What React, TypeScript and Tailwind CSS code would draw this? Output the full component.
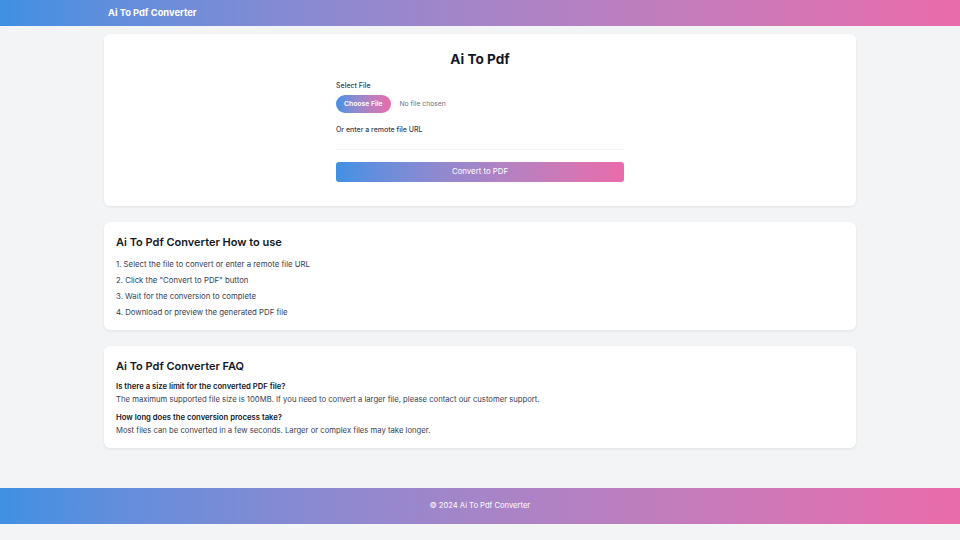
const gradient = "bg-gradient-to-r from-[#3f90e3] to-[#ea6bab]";

const steps = [
  "1. Select the file to convert or enter a remote file URL",
  '2. Click the "Convert to PDF" button',
  "3. Wait for the conversion to complete",
  "4. Download or preview the generated PDF file",
];

const faqs = [
  {
    q: "Is there a size limit for the converted PDF file?",
    a: "The maximum supported file size is 100MB. If you need to convert a larger file, please contact our customer support.",
  },
  {
    q: "How long does the conversion process take?",
    a: "Most files can be converted in a few seconds. Larger or complex files may take longer.",
  },
];

export default function App() {
  return (
    <div className="min-h-[540px] bg-[#f3f4f6] font-['Inter',sans-serif] text-[#111827]">
      <header className={`${gradient} h-[26px]`}>
        <div className="mx-auto flex h-full w-[752px] items-center px-1">
          <span className="text-[9.3px] font-bold text-white">Ai To Pdf Converter</span>
        </div>
      </header>

      <main className="mx-auto flex w-[752px] flex-col gap-4 pt-2">
        <section className="rounded-md bg-white pb-6 pt-4 shadow-[0_1px_3px_rgba(0,0,0,0.08)]">
          <h1 className="text-center text-[13.6px] font-bold leading-[18px]">Ai To Pdf</h1>
          <div className="mx-auto mt-[13px] w-[288px]">
            <label className="block text-[7px] font-medium leading-[10px] text-[#374151]">Select File</label>
            <div className="mt-[4px] flex items-center gap-[9px]">
              <span className={`${gradient} flex h-[18px] items-center rounded-full px-[8px] text-[6.8px] font-semibold text-white`}>
                Choose File
              </span>
              <span className="text-[6.8px] text-[#6b7280]">No file chosen</span>
            </div>
            <label className="mt-[12px] block text-[7px] font-medium leading-[10px] text-[#374151]">
              Or enter a remote file URL
            </label>
            <div className="mt-[9px] h-[6px] border-b border-[#f1f2f4]" />
            <button
              type="button"
              className={`${gradient} mt-[12px] flex h-[20px] w-full items-center justify-center rounded-[3px] text-[7.8px] text-white`}
            >
              Convert to PDF
            </button>
          </div>
        </section>

        <section className="rounded-md bg-white px-3 pb-[12px] pt-[13px] shadow-[0_1px_3px_rgba(0,0,0,0.08)]">
          <h2 className="text-[11px] font-semibold leading-[14px]">Ai To Pdf Converter How to use</h2>
          <ol className="mt-[10px] flex flex-col gap-[5px]">
            {steps.map((s) => (
              <li key={s} className="text-[7.8px] leading-[11px] text-[#374151]">
                {s}
              </li>
            ))}
          </ol>
        </section>

        <section className="rounded-md bg-white px-3 pb-[11px] pt-[13px] shadow-[0_1px_3px_rgba(0,0,0,0.08)]">
          <h2 className="text-[11px] font-semibold leading-[14px]">Ai To Pdf Converter FAQ</h2>
          <div className="mt-[8px] flex flex-col gap-[6px]">
            {faqs.map((f) => (
              <div key={f.q}>
                <p className="text-[7.7px] font-semibold leading-[12.5px]">{f.q}</p>
                <p className="text-[7.7px] leading-[12.5px] text-[#374151]">{f.a}</p>
              </div>
            ))}
          </div>
        </section>
      </main>

      <footer className={`${gradient} mt-10 flex h-[36px] items-center justify-center`}>
        <span className="text-[7.6px] text-white">© 2024 Ai To Pdf Converter</span>
      </footer>
    </div>
  );
}
